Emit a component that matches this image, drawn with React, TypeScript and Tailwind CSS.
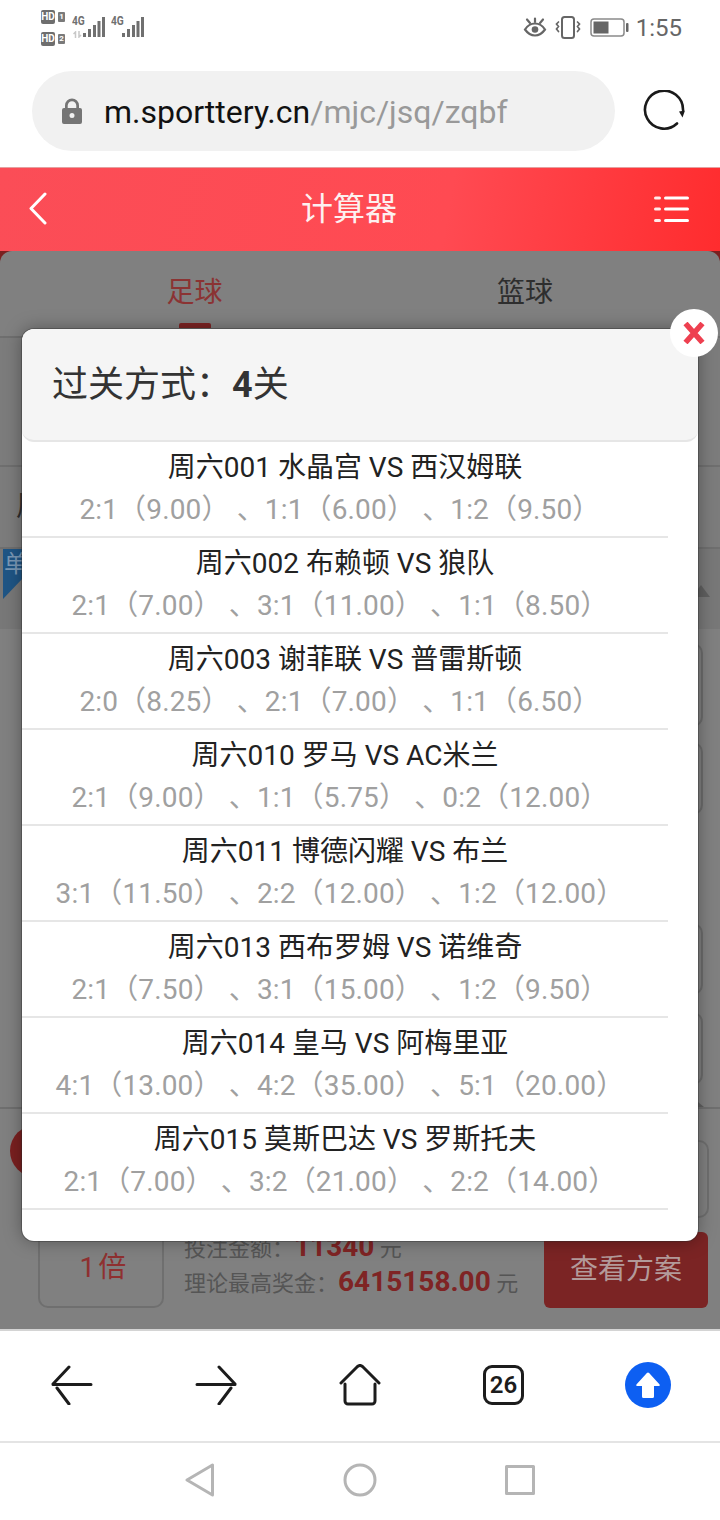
import React from "react";

const FONT = "font-['Roboto','Noto_Sans_CJK_SC',sans-serif]";

const rows = [
  ["周六001 水晶宫 VS 西汉姆联", "2:1（9.00）\u00a0、1:1（6.00）\u00a0、1:2（9.50）\u00a0"],
  ["周六002 布赖顿 VS 狼队", "2:1（7.00）\u00a0、3:1（11.00）\u00a0、1:1（8.50）\u00a0"],
  ["周六003 谢菲联 VS 普雷斯顿", "2:0（8.25）\u00a0、2:1（7.00）\u00a0、1:1（6.50）\u00a0"],
  ["周六010 罗马 VS AC米兰", "2:1（9.00）\u00a0、1:1（5.75）\u00a0、0:2（12.00）\u00a0"],
  ["周六011 博德闪耀 VS 布兰", "3:1（11.50）\u00a0、2:2（12.00）\u00a0、1:2（12.00）\u00a0"],
  ["周六013 西布罗姆 VS 诺维奇", "2:1（7.50）\u00a0、3:1（15.00）\u00a0、1:2（9.50）\u00a0"],
  ["周六014 皇马 VS 阿梅里亚", "4:1（13.00）\u00a0、4:2（35.00）\u00a0、5:1（20.00）\u00a0"],
  ["周六015 莫斯巴达 VS 罗斯托夫", "2:1（7.00）\u00a0、3:2（21.00）\u00a0、2:2（14.00）\u00a0"],
];

function Signal({ label, sub }: { label: string; sub?: boolean }) {
  return (
    <div className="relative h-[24px] w-[33px]">
      <span className="absolute left-0 top-[-2px] origin-left scale-x-[0.85] text-[12px] font-bold leading-[13px] text-[#707070] font-['Roboto',sans-serif]">
        {label}
      </span>
      {sub && (
        <svg className="absolute left-[1px] top-[14px]" width="9" height="7" viewBox="0 0 9 7" fill="none" stroke="#c8c8c8" strokeWidth="1.500">
          <path d="M2.500 7V1L0.500 3M6 0v6l2-2" />
        </svg>
      )}
      <svg className="absolute right-0 top-0" width="22" height="21" viewBox="0 0 22 21" fill="#707070">
        <rect x="0" y="16" width="3" height="4" />
        <rect x="5" y="12" width="3" height="8" />
        <rect x="10" y="8" width="3" height="12" />
        <rect x="14.500" y="4" width="3" height="16" />
        <rect x="19" y="0" width="3" height="20" />
      </svg>
    </div>
  );
}

function Hd({ n }: { n: string }) {
  return (
    <div className="flex items-center gap-[3px]">
      <span className="flex h-[14px] w-[14px] items-center justify-center overflow-hidden rounded-[2px] bg-[#6e6e6e] text-[10px] font-bold leading-none text-white font-['Roboto',sans-serif]">
        HD
      </span>
      <span className="flex h-[10px] w-[7px] items-center justify-center rounded-[1px] bg-[#7a7a7a] text-[8px] font-bold leading-none text-white font-['Roboto',sans-serif]">
        {n}
      </span>
    </div>
  );
}

function StatusBar() {
  return (
    <div className="flex h-[71px] shrink-0 justify-between pl-[41px] pr-[38px]">
      <div className="flex pt-[10px]">
        <div className="flex w-[31px] flex-col gap-[8px]">
          <Hd n="1" />
          <Hd n="2" />
        </div>
        <div className="flex gap-[6px] pt-[7px]">
          <Signal label="4G" sub />
          <Signal label="4G" />
        </div>
      </div>
      <div className="flex items-start pt-[15px]">
        <svg className="mt-[1px]" width="24" height="24" viewBox="0 0 24 24" fill="none" stroke="#666" strokeWidth="2.200" strokeLinecap="round">
          <path d="M2 13.500C5 8.800 8.500 7.500 12 7.500s7 1.300 10 6c-3 4.200-6.500 6-10 6s-7-1.800-10-6z" />
          <circle cx="12" cy="13.500" r="3.300" fill="#666" stroke="none" />
          <path d="M4 3.500l3 3.500M12 2.500V6M20 3.500l-3 3.500" />
        </svg>
        <svg className="ml-[8px]" width="26" height="26" viewBox="0 0 26 26" fill="none" stroke="#666" strokeWidth="2" strokeLinecap="round">
          <rect x="7" y="2" width="12" height="21" rx="2.500" />
          <path d="M3.500 7l-2 2 2 2.500-2 2.500 2 2.500M22.500 7l2 2-2 2.500 2 2.500-2 2.500" strokeWidth="1.700" />
        </svg>
        <svg className="ml-[9px] mt-[3px]" width="39" height="20" viewBox="0 0 39 20" fill="none">
          <rect x="1" y="1" width="33" height="17" rx="3" stroke="#8a8a8a" strokeWidth="1.500" />
          <rect x="3.500" y="3.500" width="15" height="12" fill="#666" />
          <rect x="36" y="5" width="2.500" height="9" rx="1" fill="#666" />
        </svg>
        <span className="ml-[7px] text-[24px] leading-[26px] text-[#666] font-['Roboto',sans-serif]">1:55</span>
      </div>
    </div>
  );
}

function AddressBar() {
  return (
    <div className="flex h-[96px] shrink-0 items-start pl-[32px]">
      <div className="flex h-[80px] w-[583px] items-center rounded-[40px] bg-[#f1f1f1] pl-[30px]">
        <svg width="20" height="26" viewBox="0 0 20 26" fill="#757575">
          <path d="M10 0.500a7 7 0 0 0-7 7V10H2a2 2 0 0 0-2 2v12a2 2 0 0 0 2 2h16a2 2 0 0 0 2-2V12a2 2 0 0 0-2-2h-1V7.500a7 7 0 0 0-7-7zm0 2.700a4.300 4.300 0 0 1 4.300 4.300V10H5.700V7.500A4.300 4.300 0 0 1 10 3.200zM10 15a2.500 2.500 0 1 1 0 5 2.500 2.500 0 0 1 0-5z" />
        </svg>
        <span className="ml-[22px] pt-[2px] text-[32px] leading-none text-[#111] font-['Roboto',sans-serif]">
          m.sporttery.cn<span className="text-[#999]">/mjc/jsq/zqbf</span>
        </span>
      </div>
      <svg className="ml-[28px] mt-[19px]" width="42" height="42" viewBox="0 0 42 42" fill="none" stroke="#1a1a1a" strokeWidth="2.600" strokeLinecap="round">
        <path d="M34 33.500A19 19 0 1 1 40 20" />
        <path d="M36 21.500l6-1-2.500 7z" fill="#1a1a1a" stroke="none" />
      </svg>
    </div>
  );
}

function Header() {
  return (
    <div className="flex h-[84px] shrink-0 items-center justify-between border-t border-[#e4a0a0] bg-[linear-gradient(100deg,#fb4d57_0%,#ff4a52_62%,#ff2c2e_100%)] pb-[2px] pl-[29px] pr-[30px]">
      <svg width="18" height="33" viewBox="0 0 18 33" fill="none" stroke="#fff" strokeWidth="3" strokeLinecap="round" strokeLinejoin="round">
        <path d="M16 2L2 16.500 16 31" />
      </svg>
      <span className={`mr-[3px] text-[32px] leading-none text-[#fdf0f0] ${FONT}`}>计算器</span>
      <svg width="36" height="28" viewBox="0 0 36 28" fill="#fff">
        <rect x="0" y="1.500" width="7" height="3" rx="1.500" opacity="0.9" />
        <rect x="10" y="1.500" width="25" height="3" rx="1.500" />
        <rect x="0" y="12.500" width="7" height="3" rx="1.500" opacity="0.9" />
        <rect x="10" y="12.500" width="25" height="3" rx="1.500" />
        <rect x="0" y="24" width="7" height="3" rx="1.500" opacity="0.9" />
        <rect x="10" y="24" width="25" height="3" rx="1.500" />
      </svg>
    </div>
  );
}

function Backdrop() {
  return (
    <div className={`flex h-full flex-col overflow-hidden rounded-t-[12px] bg-[#808080] ${FONT}`}>
      <div className="flex h-[87px] shrink-0 border-b-2 border-[#6f6f6f] text-[28px]">
        <div className="relative flex w-[360px] justify-center pl-[29px] pt-[24px] text-[#8b3333]">
          <span className="mt-[2px] leading-[32px]">足球</span>
          <span className="absolute bottom-[8px] left-[179px] h-[5px] w-[32px] rounded-t-[2px] bg-[#7d2424]" />
        </div>
        <div className="flex w-[360px] justify-center pr-[30px] pt-[24px] text-[#2e2e2e]">
          <span className="mt-[2px] leading-[32px]">篮球</span>
        </div>
      </div>
      <div className="h-[129px] shrink-0 border-b-2 border-[#6f6f6f] bg-[#7c7c7c]" />
      <div className="flex h-[82px] shrink-0 items-center border-b-2 border-[#6f6f6f] bg-[#7c7c7c] pl-[16px] text-[28px] text-[#2e2e2e]">
        周
      </div>
      <div className="flex h-[80px] shrink-0 items-start justify-between bg-[#787878] pl-[3px] pr-[10px]">
        <div className="h-[50px] w-[40px] bg-[#1f5585] pl-[1px] text-[24px] leading-[30px] text-[#7a98b5] [clip-path:polygon(0_0,100%_0,100%_16%,0_100%)]">单</div>
        <div className="mt-[36px] h-0 w-0 border-x-[9px] border-b-[12px] border-x-transparent border-b-[#606060]" />
      </div>
      <div className="flex flex-1 flex-col items-end pr-[17px] pt-[14px]">
        <div className="h-[84px] w-[120px] rounded-[10px] border-2 border-[#6c6c6c]" />
        <div className="mt-[15px] h-[73px] w-[120px] rounded-[10px] border-2 border-[#6c6c6c]" />
        <div className="mt-[108px] h-[72px] w-[120px] rounded-[10px] border-2 border-[#6c6c6c]" />
        <div className="mt-[17px] h-[73px] w-[120px] rounded-[10px] border-2 border-[#6c6c6c]" />
        <div className="mr-[-1px] mt-[17px] h-0 w-0 border-x-[6px] border-b-[5px] border-x-transparent border-b-[#606060]" />
      </div>
      <div className="relative flex h-[222px] shrink-0 flex-col border-t-2 border-[#6f6f6f]">
        <div className="flex h-[109px] shrink-0 items-start justify-between pl-[10px] pr-[11px] pt-[16px]">
          <div className="h-[52px] w-[52px] rounded-full bg-[#7a2020]" />
          <div className="mt-[15px] h-[78px] w-[120px] rounded-[10px] border-2 border-[#6f6f6f]" />
        </div>
        <div className="flex flex-1 items-end pb-[21px] pl-[38px] pr-[12px]">
          <div className="flex h-[90px] w-[126px] items-center justify-center rounded-[10px] border-2 border-[#6f6f6f] pl-[4px] pt-[10px] text-[28px] text-[#8f3030]">
            1<span className="ml-[3px]">倍</span>
          </div>
          <div className="mb-[9px] ml-[20px] flex w-[360px] flex-col text-[22px] leading-[35px] text-[#555]">
            <span className="h-[35px]">
              投注金额：<span className="text-[28px] font-bold text-[#7f2424]">11340</span> 元
            </span>
            <span className="h-[35px]">
              理论最高奖金：<span className="text-[28px] font-bold text-[#7f2424]">6415158.00</span> 元
            </span>
          </div>
          <div className="flex h-[76px] w-[164px] items-center justify-center rounded-[6px] bg-[#7b2424] text-[28px] text-[#b39a9a]">
            查看方案
          </div>
        </div>
      </div>
    </div>
  );
}

function Modal() {
  return (
    <div className={`absolute left-[22px] top-[78px] w-[676px] ${FONT}`}>
      <div className="h-[912px] rounded-[12px] bg-white shadow-[0_0_0_1px_rgba(40,40,40,0.35),0_0_18px_rgba(0,0,0,0.35)]">
        <div className="flex h-[113px] items-start rounded-[12px] border-b-2 border-[#e6e6e6] bg-[#f5f5f5] pl-[30px] pt-[34px] text-[36px] leading-[44px] text-[#333]">
          过关方式：<span className="font-bold">4</span>关
        </div>
        <div className="w-[646px]">
          {rows.map(([title, odds]) => (
            <div key={title} className="flex h-[96px] flex-col items-center border-b-2 border-[#e6e6e6] pt-[9px]">
              <div className="text-[28px] leading-[34px] text-[#222]">{title}</div>
              <div className="mr-[3px] mt-[8px] whitespace-nowrap text-[28px] leading-[34px] tracking-[0.15px] text-[#a0a0a0]">{odds}</div>
            </div>
          ))}
        </div>
      </div>
      <div className="absolute right-[-20px] top-[-20px] flex h-[48px] w-[48px] items-center justify-center rounded-full bg-white">
        <svg width="22" height="22" viewBox="0 0 22 22" fill="none" stroke="#ee4050" strokeWidth="5.500">
          <path d="M2.500 1.500l17 19M19.500 1.500l-17 19" />
        </svg>
      </div>
    </div>
  );
}

function Toolbar() {
  return (
    <div className="flex h-[112px] shrink-0 items-center justify-between border-t-2 border-[#d4d4d4] pb-[2px] pl-[51px] pr-[49px]">
      <svg width="42" height="40" viewBox="0 0 42 40" fill="none" stroke="#1c1c1c" strokeWidth="3" strokeLinecap="round">
        <path d="M2 19.500h38M18 2L2 19M6 23l12 16" />
      </svg>
      <svg className="ml-[1px]" width="42" height="40" viewBox="0 0 42 40" fill="none" stroke="#1c1c1c" strokeWidth="3" strokeLinecap="round">
        <path d="M2 19.500h38M24 2l16 17M36 23L24 39" />
      </svg>
      <svg width="44" height="42" viewBox="0 0 44 42" fill="none" stroke="#1c1c1c" strokeWidth="3" strokeLinecap="round" strokeLinejoin="round">
        <path d="M3 19L19.500 2.500q2.500-2 5 0L41 19" />
        <path d="M7 20v17a3 3 0 0 0 3 3h24a3 3 0 0 0 3-3V20" />
      </svg>
      <div className="flex h-[40px] w-[41px] items-center justify-center rounded-[9px] border-[3px] border-[#1c1c1c] text-[24px] font-semibold leading-none text-[#1c1c1c] font-['Roboto',sans-serif]">
        26
      </div>
      <div className="flex h-[46px] w-[46px] items-center justify-center rounded-full bg-[#0d5ff2]">
        <svg width="26" height="28" viewBox="0 0 26 28" fill="#fff">
          <path d="M13 1.500a1.500 1.500 0 0 1 1.100.5l10.500 11.500q.7 1.500-.8 1.500H19v10.500a1.500 1.500 0 0 1-1.500 1.500h-9A1.500 1.500 0 0 1 7 25.500V15H2.200q-1.500 0-.8-1.500L11.900 2a1.500 1.500 0 0 1 1.100-.5z" />
        </svg>
      </div>
    </div>
  );
}

function NavBar() {
  return (
    <div className="flex h-[78px] shrink-0 items-center justify-center gap-[128px] border-t-2 border-[#e4e4e4] pb-[2px]">
      <svg width="30" height="34" viewBox="0 0 30 34" fill="none" stroke="#b5b5b5" strokeWidth="3" strokeLinejoin="round">
        <path d="M27.500 2v30L2 17z" />
      </svg>
      <svg width="34" height="34" viewBox="0 0 34 34" fill="none" stroke="#b5b5b5" strokeWidth="3">
        <circle cx="17" cy="17" r="15" />
      </svg>
      <svg width="30" height="30" viewBox="0 0 30 30" fill="none" stroke="#b5b5b5" strokeWidth="3" strokeLinejoin="round">
        <rect x="1.500" y="1.500" width="27" height="27" />
      </svg>
    </div>
  );
}

export default function App() {
  return (
    <div className="flex h-[1520px] w-[720px] flex-col overflow-hidden bg-white">
      <StatusBar />
      <AddressBar />
      <Header />
      <div className="relative h-[1078px] shrink-0 bg-[#7a2020]">
        <Backdrop />
        <Modal />
      </div>
      <Toolbar />
      <NavBar />
    </div>
  );
}
